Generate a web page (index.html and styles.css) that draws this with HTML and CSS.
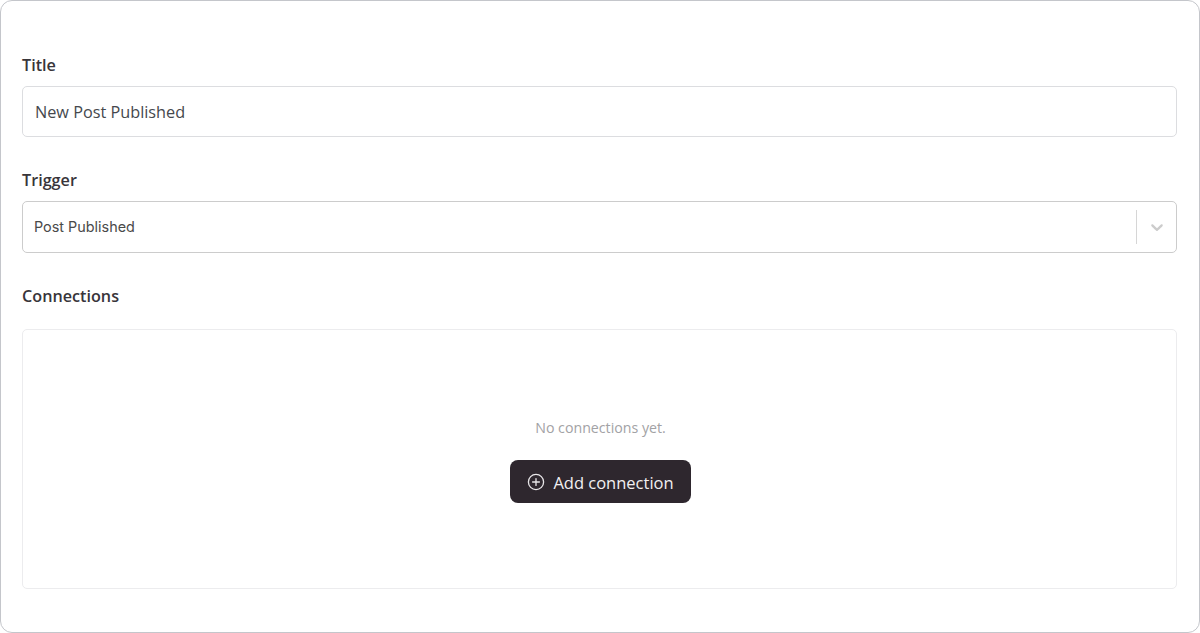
FILE: index.html
```html
<!DOCTYPE html>
<html lang="en">

<head>
  <meta charset="UTF-8" />
  <meta name="viewport" content="width=device-width, initial-scale=1.0" />
  <title>Edit Webhook</title>
  <link rel="stylesheet" href="styles.css">
</head>

<body>
  <form class="card">
    <div class="field">
      <label class="field-label" for="title">Title</label>
      <input class="text-input" type="text" id="title" value="New Post Published" />
    </div>

    <div class="field">
      <label class="field-label">Trigger</label>
      <div class="select-box">
        <span class="select-value">Post Published</span>
        <span class="select-divider"></span>
        <span class="select-arrow">
          <svg width="20" height="20" viewBox="0 0 20 20">
            <path fill="#ccc" d="M4.516 7.548c.436-.446 1.043-.481 1.576 0L10 11.295l3.908-3.747c.533-.481 1.141-.446 1.574 0 .436.445.408 1.197 0 1.615-.406.418-4.695 4.502-4.695 4.502a1.095 1.095 0 0 1-1.576 0S4.924 9.581 4.516 9.163s-.436-1.17 0-1.615z" />
          </svg>
        </span>
      </div>
    </div>

    <div class="connections">
      <div class="field-label">Connections</div>
      <div class="empty-box">
        <p class="empty-text">No connections yet.</p>
        <button class="add-btn" type="button">
          <svg width="18" height="18" viewBox="0 0 18 18" fill="none" stroke="#e8e6e8" stroke-width="1.3" stroke-linecap="round">
            <circle cx="9" cy="9" r="7.6" />
            <path d="M9 5.6v6.8M5.6 9h6.8" />
          </svg>
          Add connection
        </button>
      </div>
    </div>
  </form>
</body>

</html>
```

FILE: styles.css
```css
* {
  box-sizing: border-box;
}

html,
body {
  height: 100%;
}

body {
  margin: 0;
  background: #fff;
  font-family: "Open Sans", "Noto Sans", Arial, sans-serif;
  color: #2f2a30;
}

.card {
  height: 633px;
  padding: 53px 22px 43px 21px;
  border: 1px solid #c4c6cb;
  border-radius: 12px;
  background: #fff;
}

.field {
  margin-bottom: 32px;
}

.field-label {
  display: block;
  font-size: 16.2px;
  line-height: 22px;
  font-weight: 600;
  color: #38353a;
  margin-bottom: 10px;
}

.text-input {
  display: block;
  width: 100%;
  height: 51px;
  padding: 0 12px;
  border: 1px solid #dcdde0;
  border-radius: 5px;
  background: #fff;
  font-family: inherit;
  font-size: 16.25px;
  color: #45484d;
}

.select-box {
  display: flex;
  align-items: center;
  height: 52px;
  padding-left: 11px;
  border: 1px solid #cccccc;
  border-radius: 5px;
}

.select-value {
  flex: 1;
  padding-bottom: 2px;
  font-family: Inter, "Noto Sans", sans-serif;
  font-size: 14.4px;
  color: #4a4a4a;
}

.select-divider {
  width: 1px;
  height: 34px;
  background: #d6d6d6;
}

.select-arrow {
  display: flex;
  justify-content: center;
  width: 39px;
}

.connections .field-label {
  margin-bottom: 22px;
}

.empty-box {
  display: flex;
  flex-direction: column;
  align-items: center;
  justify-content: center;
  height: 260px;
  padding: 2px 0 0 2px;
  border: 1px solid #ececee;
  border-radius: 5px;
}

.empty-text {
  margin: 0 0 22px;
  font-size: 14.2px;
  line-height: 20px;
  color: #a2a2a5;
}

.add-btn {
  display: flex;
  align-items: center;
  gap: 8px;
  height: 43px;
  padding: 2px 17px 0;
  border: none;
  border-radius: 8px;
  background: #2e272e;
  color: #f2f0f2;
  font-family: inherit;
  font-size: 16.5px;
  cursor: pointer;
}
```
